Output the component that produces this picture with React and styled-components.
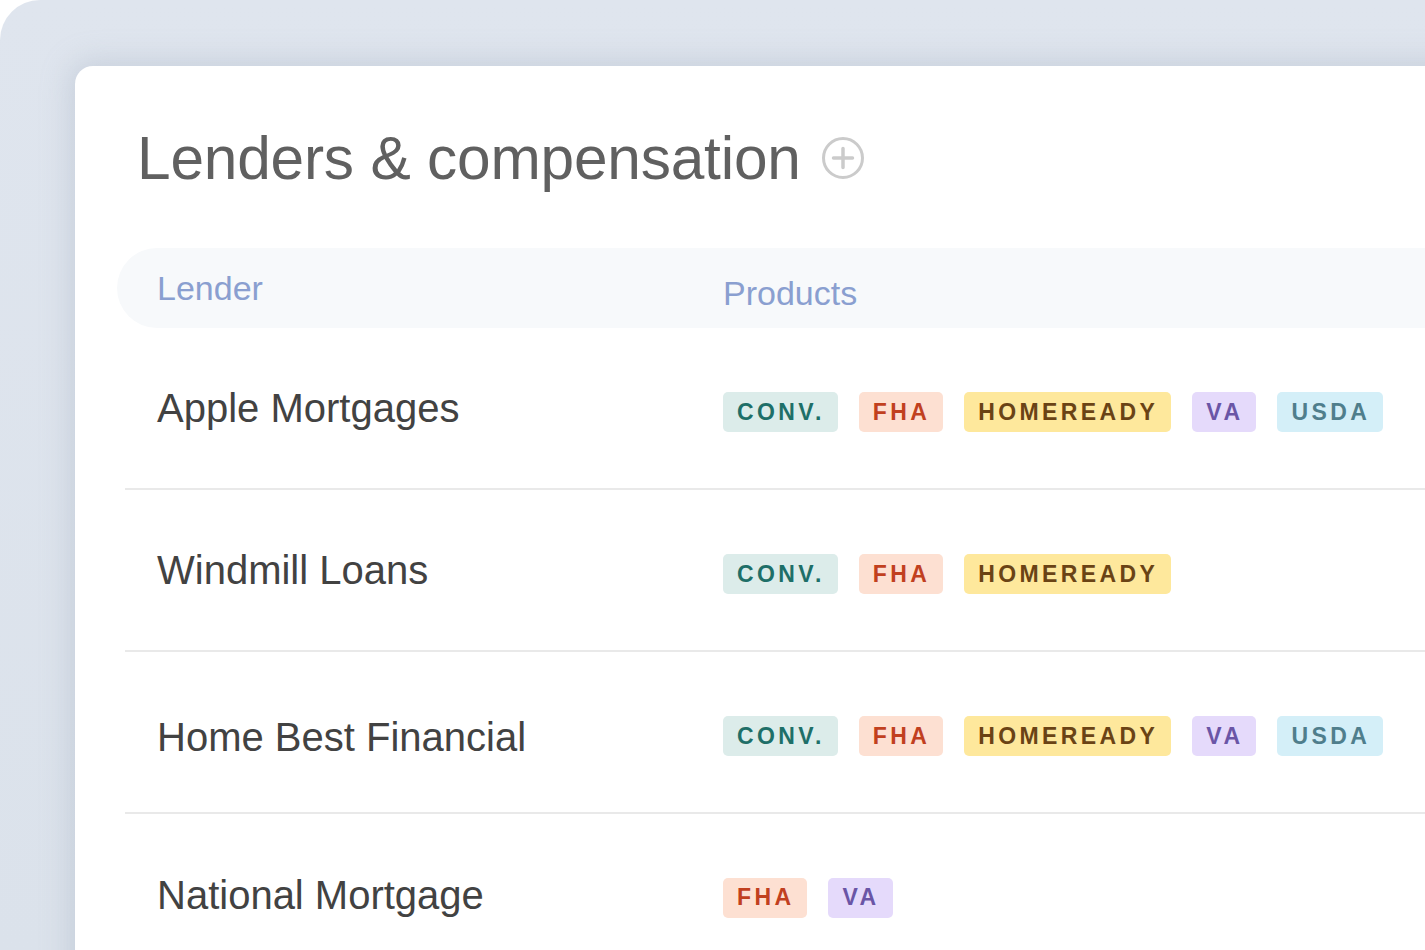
import React from "react";
import styled, {createGlobalStyle} from "styled-components";

const GlobalStyle = createGlobalStyle`
  html, body {
    margin: 0;
    padding: 0;
    background: #ffffff;
  }
  body {
    font-family: "Liberation Sans", Arial, sans-serif;
  }
`;

const Frame = styled.div`
  width: 1425px;
  height: 950px;
  overflow: hidden;
  background: linear-gradient(180deg, #dfe5ee 0%, #dbe2eb 100%);
  border-top-left-radius: 40px;
  padding: 66px 0 0 75px;
  box-sizing: border-box;
`;

const Card = styled.div`
  width: 1400px;
  height: 950px;
  background: #ffffff;
  border-top-left-radius: 18px;
  box-shadow: 0 0 28px 6px rgba(160, 172, 190, 0.35);
  padding: 58px 0 0 42px;
  box-sizing: border-box;
`;

const TitleRow = styled.div`
  display: flex;
  align-items: center;
  gap: 20px;
  margin-left: 20px;
  height: 68px;
`;

const Title = styled.h1`
  margin: 0;
  font-weight: 400;
  font-size: 60.4px;
  color: #606060;
  letter-spacing: -0.2px;
`;

const AddIcon = () => (
  <svg width="44" height="44" viewBox="0 0 44 44">
    <circle cx="22" cy="22" r="19.5" fill="none" stroke="#cbcbcb" strokeWidth="3"/>
    <path d="M22 12.5v19M12.5 22h19" stroke="#cbcbcb" strokeWidth="3.5" strokeLinecap="round"/>
  </svg>
);

const Table = styled.div`
  margin-top: 56px;
`;

const HeaderRow = styled.div`
  display: grid;
  grid-template-columns: 566px 1fr;
  height: 80px;
  background: #f7f9fb;
  border-top-left-radius: 40px;
  border-bottom-left-radius: 40px;
  padding-left: 40px;
`;

const HeaderCell = styled.div`
  display: flex;
  align-items: center;
  font-size: 34px;
  color: #8a9fd0;
  padding-top: ${p => p.$shift || 0}px;
`;

const Row = styled.div`
  display: grid;
  grid-template-columns: 566px 1fr;
  height: 160px;
  margin-left: 8px;
  padding-left: 32px;
  border-bottom: 2px solid #e9e9e9;
  &:last-child {
    border-bottom: none;
  }
`;

const LenderName = styled.div`
  display: flex;
  align-items: center;
  font-size: 40px;
  color: #424242;
  padding-top: ${p => p.$shift || 0}px;
`;

const Tags = styled.div`
  display: flex;
  align-items: center;
  gap: 21px;
  padding-top: ${p => p.$shift || 0}px;
`;

const tagColors = {
  "CONV.": {bg: "#dcecea", fg: "#1e6f68"},
  "FHA": {bg: "#fde0d2", fg: "#c1401f"},
  "HOMEREADY": {bg: "#fee89c", fg: "#6a4315"},
  "VA": {bg: "#e5dafb", fg: "#6a55a6"},
  "USDA": {bg: "#d4eff8", fg: "#4f7e8c"},
};

const Tag = styled.span`
  display: inline-flex;
  align-items: center;
  height: 40px;
  padding: 0 13px 0 14px;
  border-radius: 5px;
  background: ${p => p.$bg};
  color: ${p => p.$fg};
  font-size: 23px;
  font-weight: 700;
  letter-spacing: 3.4px;
`;

const lenders = [
  {name: "Apple Mortgages", products: ["CONV.", "FHA", "HOMEREADY", "VA", "USDA"], text: -2, tags: 8},
  {name: "Windmill Loans", products: ["CONV.", "FHA", "HOMEREADY"], text: -2, tags: 8},
  {name: "Home Best Financial", products: ["CONV.", "FHA", "HOMEREADY", "VA", "USDA"], text: 10, tags: 8},
  {name: "National Mortgage", products: ["FHA", "VA"], text: 3, tags: 7},
];

export default function App() {
  return (
    <>
      <GlobalStyle/>
      <Frame>
        <Card>
          <TitleRow>
            <Title>Lenders &amp; compensation</Title>
            <AddIcon/>
          </TitleRow>
          <Table>
            <HeaderRow>
              <HeaderCell>Lender</HeaderCell>
              <HeaderCell $shift={10}>Products</HeaderCell>
            </HeaderRow>
            {lenders.map(lender => (
              <Row key={lender.name}>
                <LenderName $shift={lender.text}>{lender.name}</LenderName>
                <Tags $shift={lender.tags}>
                  {lender.products.map(p => (
                    <Tag key={p} $bg={tagColors[p].bg} $fg={tagColors[p].fg}>{p}</Tag>
                  ))}
                </Tags>
              </Row>
            ))}
          </Table>
        </Card>
      </Frame>
    </>
  );
}
